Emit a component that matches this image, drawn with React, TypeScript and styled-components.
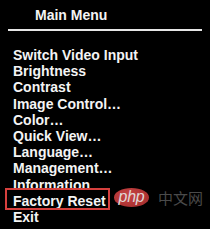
import React from "react"
import styled, { createGlobalStyle } from "styled-components"

const items = [
  "Switch Video Input",
  "Brightness",
  "Contrast",
  "Image Control…",
  "Color…",
  "Quick View…",
  "Language…",
  "Management…",
  "Information",
  "Factory Reset",
  "Exit",
]

//------------------------------
// Main
//------------------------------
export default function App() {
  return (
    <>
      <Global />
      <Screen>
        <Title>Main Menu</Title>
        <Rule />
        <MenuList>
          {items.map((name) => (
            <MenuItem key={name} $selected={name === "Factory Reset"}>
              {name}
            </MenuItem>
          ))}
        </MenuList>
        <Watermark>
          <PhpBadge>php</PhpBadge>
          <CnText>中文网</CnText>
        </Watermark>
      </Screen>
    </>
  )
}

//------------------------------
// Styles
//------------------------------
const Global = createGlobalStyle`
  html, body {
    margin: 0;
    padding: 0;
    background: #000;
  }
`

const Screen = styled.div`
  position: relative;
  display: flex;
  flex-direction: column;
  width: 210px;
  height: 229px;
  overflow: hidden;
  background: #000;
  color: #f4f4f4;
  font-family: "Liberation Sans", Arial, sans-serif;
  font-weight: bold;
  font-size: 14px;
`

const Title = styled.div`
  padding: 7px 0 0 35px;
  line-height: 16px;
`

const Rule = styled.div`
  margin: 6px 0 0 8px;
  width: 194px;
  height: 2px;
  background: #e6e6e6;
`

const MenuList = styled.ul`
  list-style: none;
  margin: 16px 0 0;
  padding: 0 0 0 13px;
  display: flex;
  flex-direction: column;
`

const MenuItem = styled.li<{ $selected?: boolean }>`
  position: relative;
  line-height: 16.2px;
  height: 16.2px;
  white-space: nowrap;
  &::after {
    content: "";
    display: ${(p) => (p.$selected ? "block" : "none")};
    position: absolute;
    left: -8px;
    top: -5px;
    width: 101px;
    height: 18px;
    border: 2px solid #d6403e;
  }
`

const Watermark = styled.div`
  position: absolute;
  left: 114px;
  top: 188px;
  display: flex;
  align-items: center;
  gap: 9px;
`

const PhpBadge = styled.div`
  display: flex;
  align-items: center;
  justify-content: center;
  width: 35px;
  height: 19px;
  border-radius: 50%;
  background: radial-gradient(ellipse at 40% 35%, #c84444, #9e2a2a);
  color: #e0d6d6;
  font-family: "Liberation Sans", sans-serif;
  font-style: italic;
  font-weight: normal;
  font-size: 16px;
  letter-spacing: -0.3px;
  line-height: 19px;
  padding-bottom: 2px;
  box-sizing: border-box;
`

const CnText = styled.div`
  color: #4a4a4a;
  font-family: "Noto Sans CJK SC", sans-serif;
  font-weight: normal;
  font-size: 15px;
  line-height: 19px;
`
